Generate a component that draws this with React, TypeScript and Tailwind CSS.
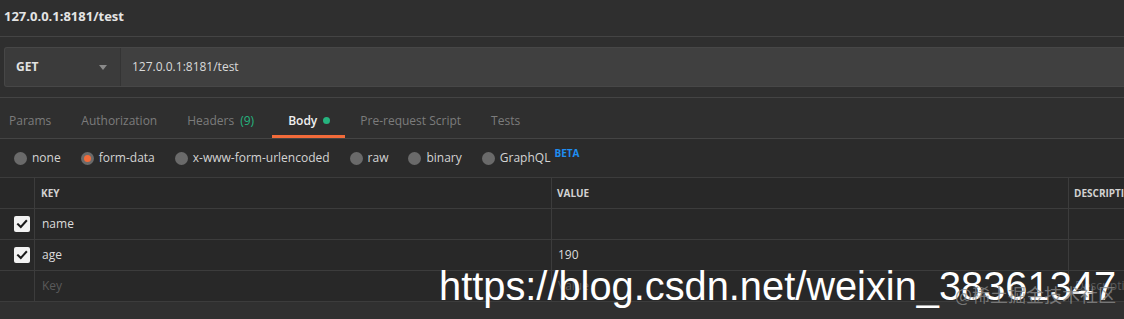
import React from "react";

const Check = () => (
  <div className="w-[16px] h-[16px] rounded-[2px] bg-[#f2f2f2] flex items-center justify-center">
    <svg width="12" height="12" viewBox="0 0 12 12">
      <path d="M2 6.3 L4.8 9 L10.2 3" fill="none" stroke="#1a1a1a" strokeWidth="2" strokeLinecap="square" />
    </svg>
  </div>
);

const Radio = ({ label, selected }: { label: string; selected?: boolean }) => (
  <div className="flex items-center gap-[5px]">
    <div className="w-[13px] h-[13px] rounded-full bg-[#6a6a6a] flex items-center justify-center">
      {selected && <div className="w-[7px] h-[7px] rounded-full bg-[#f26b3a]" />}
    </div>
    <span className="text-[12px] text-[#d4d4d4]">{label}</span>
  </div>
);

const Tab = ({
  children,
  active,
  cls,
}: {
  children: React.ReactNode;
  active?: boolean;
  cls: string;
}) => (
  <div
    className={`flex items-center pt-[8px] border-b-[3px] text-[12px] ${cls} ${
      active ? "border-[#f26b3a] text-[#f0f0f0] font-semibold" : "border-transparent text-[#7c7c7c]"
    }`}
  >
    {children}
  </div>
);

const Row = ({ check, k, v, d, placeholder }: { check?: boolean; k: string; v: string; d?: string; placeholder?: boolean }) => (
  <div className="flex h-[31px] border-b border-[#3c3c3c] text-[12px]">
    <div className="w-[35px] shrink-0 border-r border-[#3c3c3c] flex items-center pl-[14px]">{check && <Check />}</div>
    <div className={`w-[517px] shrink-0 border-r border-[#3c3c3c] flex items-center pl-[7px] ${placeholder ? "text-[#5a5a5a]" : "text-[#dcdcdc]"}`}>{k}</div>
    <div className={`w-[517px] shrink-0 border-r border-[#3c3c3c] flex items-center pl-[6px] ${placeholder ? "text-[#5a5a5a]" : "text-[#dcdcdc]"}`}>{v}</div>
    <div className="flex-1 flex items-center pl-[6px] whitespace-nowrap overflow-hidden text-[#5a5a5a]">{d}</div>
  </div>
);

export default function App() {
  return (
    <div
      className="relative w-[1124px] h-[319px] overflow-hidden bg-[#303030] flex flex-col"
      style={{ fontFamily: '"Open Sans", "Noto Sans", sans-serif' }}
    >
      {/* Title */}
      <div className="h-[37px] shrink-0 border-b border-[#444444] bg-[#2f2f2f] flex items-center pl-[4px] pb-[2px]">
        <span className="text-[13px] font-bold text-[#e4e4e4]">127.0.0.1:8181/test</span>
      </div>

      {/* URL bar */}
      <div className="h-[61px] shrink-0 border-b border-[#444444] bg-[#2f2f2f] pl-[4px] pt-[10px]">
        <div className="h-[40px] rounded-l-[3px] border-y border-l border-[#474747] bg-[#404040] flex overflow-hidden">
          <div className="w-[116px] shrink-0 bg-[#3b3b3b] border-r border-[#343434] flex items-center justify-between pl-[11px] pr-[13px]">
            <span className="text-[12px] font-bold text-[#e2e2e2]">GET</span>
            <svg width="8" height="5" viewBox="0 0 8 5">
              <path d="M0 0 L8 0 L4 5 Z" fill="#8a8a8a" />
            </svg>
          </div>
          <div className="flex items-center pl-[11px] text-[12px] text-[#dadada]">127.0.0.1:8181/test</div>
        </div>
      </div>

      {/* Tabs */}
      <div className="h-[41px] shrink-0 border-b border-[#444444] bg-[#2f2f2f] flex">
        <Tab cls="pl-[9px] pr-[15px]">Params</Tab>
        <Tab cls="px-[15px]">Authorization</Tab>
        <Tab cls="pl-[15px] pr-[18px]">
          Headers <span className="ml-[6px] text-[#26b47f]">(9)</span>
        </Tab>
        <Tab active cls="pl-[16px] pr-[15px]">
          Body
          <span className="ml-[6px] w-[7px] h-[7px] rounded-full bg-[#26b47f] inline-block" />
        </Tab>
        <Tab cls="px-[15px]">Pre-request Script</Tab>
        <Tab cls="px-[15px]">Tests</Tab>
      </div>

      {/* Body type radios */}
      <div className="h-[39px] shrink-0 border-b border-[#3c3c3c] bg-[#2b2b2b] flex items-center pl-[14px] gap-[20px]">
        <Radio label="none" />
        <Radio label="form-data" selected />
        <Radio label="x-www-form-urlencoded" />
        <Radio label="raw" />
        <Radio label="binary" />
        <div className="flex items-center">
          <Radio label="GraphQL" />
          <span className="ml-[4px] -mt-[10px] text-[10px] font-bold text-[#1f8ef1]">BETA</span>
        </div>
      </div>

      {/* Table */}
      <div className="shrink-0 bg-[#282828]">
        <div className="flex h-[31px] border-b border-[#3c3c3c] text-[10px] font-bold text-[#d2d2d2]">
          <div className="w-[35px] shrink-0 border-r border-[#3c3c3c]" />
          <div className="w-[517px] shrink-0 border-r border-[#3c3c3c] flex items-center pl-[6px]">KEY</div>
          <div className="w-[517px] shrink-0 border-r border-[#3c3c3c] flex items-center pl-[5px]">VALUE</div>
          <div className="flex-1 flex items-center pl-[5px] whitespace-nowrap overflow-hidden">DESCRIPTION</div>
        </div>
        <Row check k="name" v="" />
        <Row check k="age" v="190" />
        <Row k="Key" v="Value" d="Description" placeholder />
      </div>
      <div className="flex-1 bg-[#303030]" />

      {/* Watermarks */}
      <div
        className="absolute left-[439px] top-[266px] text-[39.8px] leading-[40px] text-white whitespace-nowrap"
        style={{ fontFamily: '"Liberation Sans", Arial, sans-serif' }}
      >
        https://blog.csdn.net/weixin_38361347
      </div>
      <div
        className="absolute left-[955px] top-[285px] text-[18px] leading-[18px] text-[#8a8a8a]/80 whitespace-nowrap"
        style={{ fontFamily: '"Noto Sans CJK SC", sans-serif' }}
      >
        @稀土掘金技术社区
      </div>
    </div>
  );
}
